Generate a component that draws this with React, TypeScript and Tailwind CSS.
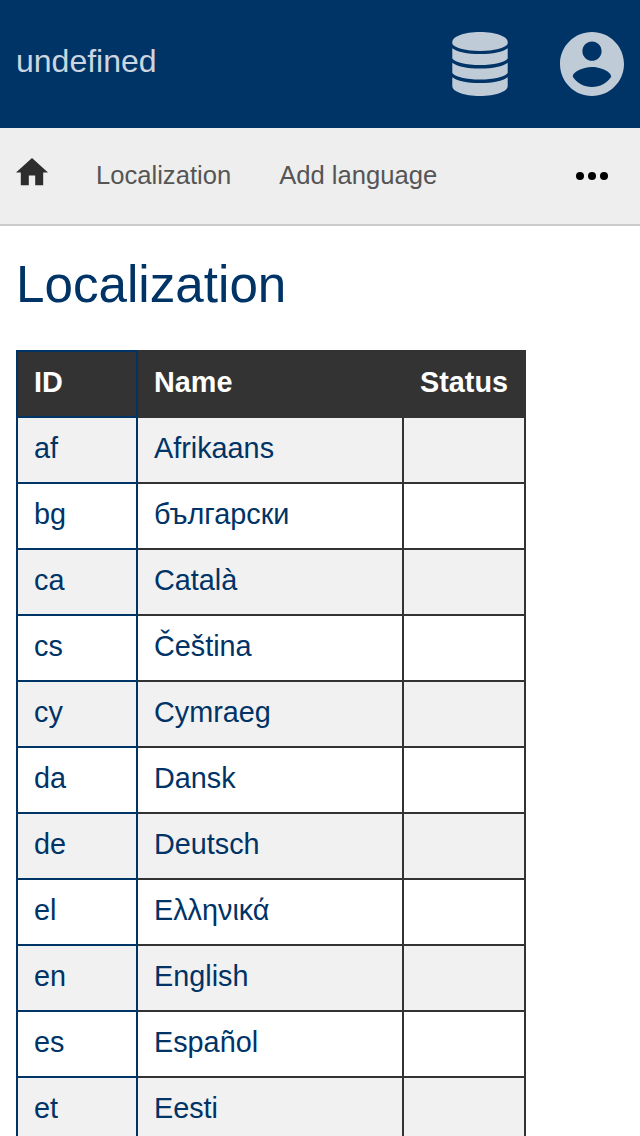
const languages = [
  ['af', 'Afrikaans'],
  ['bg', 'български'],
  ['ca', 'Català'],
  ['cs', 'Čeština'],
  ['cy', 'Cymraeg'],
  ['da', 'Dansk'],
  ['de', 'Deutsch'],
  ['el', 'Ελληνικά'],
  ['en', 'English'],
  ['es', 'Español'],
  ['et', 'Eesti'],
];

function DatabaseIcon() {
  return (
    <svg className="h-16 w-14" viewBox="0 0 56 64" fill="#c0cbd8">
      <path d="M.3 10C.3 4.500 12 0 28 0s27.700 4.500 27.700 10v2C53 16 42 19 28 19S3 16 .3 12z" />
      <path d="M.3 16.200C5 20 15 22 28 22s23-2 27.700-5.800V26.500c-3 4-14 6.500-27.700 6.500S3.300 30.500.3 26.500z" />
      <path d="M.3 30.700C5 34.500 15 36.500 28 36.500s23-2 27.700-5.800V41c-3 4-14 6.500-27.700 6.500S3.300 45 .3 41z" />
      <path d="M.3 45.200C5 49 15 51 28 51s23-2 27.700-5.800V54c0 5.500-11.700 10-27.700 10S.3 59.500.3 54z" />
    </svg>
  );
}

function AccountIcon() {
  return (
    <svg className="size-16" viewBox="2 2 20 20" fill="#c0cbd8">
      <path d="M12 2C6.480 2 2 6.480 2 12s4.480 10 10 10 10-4.480 10-10S17.520 2 12 2zm0 3c1.660 0 3 1.340 3 3s-1.340 3-3 3-3-1.340-3-3 1.340-3 3-3zm0 14.200c-2.500 0-4.710-1.280-6-3.220.030-1.990 4-3.080 6-3.080 1.990 0 5.970 1.090 6 3.080-1.290 1.940-3.500 3.220-6 3.220z" />
    </svg>
  );
}

export default function App() {
  return (
    <div className="h-[1136px] w-[640px] overflow-hidden bg-white font-['Liberation_Sans',Arial,sans-serif] text-[#003366]">
      <header className="flex h-32 items-center justify-between bg-[#003366] pr-4 pl-4">
        <span className="pb-1.5 text-[32px] leading-10 text-[#ccd6e0]">undefined</span>
        <div className="flex items-center gap-[52px]">
          <DatabaseIcon />
          <AccountIcon />
        </div>
      </header>
      <nav className="flex h-[98px] items-center border-b-2 border-[#cccccc] bg-[#eeeeee] pr-8 pl-4 text-[25.6px] leading-9 text-[#555555]">
        <svg className="mr-12 mb-2 h-[27.2px] w-8 shrink-0" viewBox="2 3 20 17" fill="#2d2d2d">
          <path d="M10 20v-6h4v6h5v-8h3L12 3 2 12h3v8z" />
        </svg>
        <a className="mr-12 pb-0.5">Localization</a>
        <a className="pb-0.5">Add language</a>
        <svg className="ml-auto h-2 w-8" viewBox="0 0 32 8" fill="#000000">
          <circle cx="4" cy="4" r="4" />
          <circle cx="16" cy="4" r="4" />
          <circle cx="28" cy="4" r="4" />
        </svg>
      </nav>
      <main className="px-4 pt-[29px]">
        <h1 className="text-[51.2px] leading-[60px]">Localization</h1>
        <table className="mt-[35px] w-[510px] table-fixed border-collapse text-left text-[28.8px] leading-8">
          <colgroup>
            <col className="w-[120px]" />
            <col className="w-[266px]" />
            <col className="w-[122px]" />
          </colgroup>
          <thead>
            <tr className="h-[66px] bg-[#333333] text-white">
              <th className="border-2 border-[#003366] px-4 pt-0 pb-1">ID</th>
              <th className="border-2 border-[#333333] px-4 pt-0 pb-1">Name</th>
              <th className="border-2 border-[#333333] px-4 pt-0 pb-1">Status</th>
            </tr>
          </thead>
          <tbody>
            {languages.map(([id, name]) => (
              <tr key={id} className="h-[66px] odd:bg-[#f1f1f1]">
                <td className="border-2 border-[#003366] px-4 pt-0 pb-1">{id}</td>
                <td className="border-2 border-[#333333] px-4 pt-0 pb-1">{name}</td>
                <td className="border-2 border-[#333333] px-4 pt-0 pb-1" />
              </tr>
            ))}
          </tbody>
        </table>
      </main>
    </div>
  );
}
